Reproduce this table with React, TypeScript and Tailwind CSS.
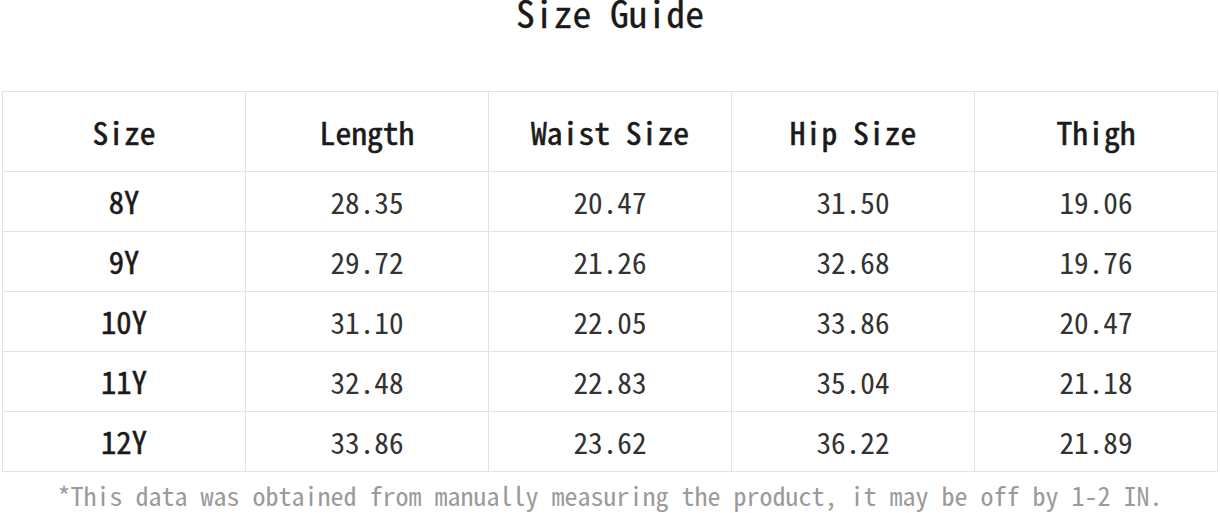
import React from "react";

const headers = ["Size", "Length", "Waist Size", "Hip Size", "Thigh"];
const rows = [
  ["8Y", "28.35", "20.47", "31.50", "19.06"],
  ["9Y", "29.72", "21.26", "32.68", "19.76"],
  ["10Y", "31.10", "22.05", "33.86", "20.47"],
  ["11Y", "32.48", "22.83", "35.04", "21.18"],
  ["12Y", "33.86", "23.62", "36.22", "21.89"],
];

export default function App() {
  return (
    <div className="w-[1220px] h-[513px] bg-white overflow-hidden [font-family:'Noto_Sans_Mono_CJK_SC','Liberation_Mono',monospace]">
      <div className="h-[23px] text-center text-[37.6px] leading-[23px] text-[#1a1a1a] [-webkit-text-stroke:0.3px_#1a1a1a]">
        Size Guide
      </div>
      <div className="mt-[68px] ml-[2px] w-[1216px] border-l border-t border-[#e3e3e3]">
        <div className="grid grid-cols-5">
          {headers.map((h) => (
            <div
              key={h}
              className="h-[80px] flex items-center justify-center border-r border-b border-[#e3e3e3] text-[31.6px] leading-none text-[#1a1a1a] [-webkit-text-stroke:0.6px_#1a1a1a]"
            >
              {h}
            </div>
          ))}
        </div>
        {rows.map((r) => (
          <div key={r[0]} className="grid grid-cols-5">
            {r.map((c, i) => (
              <div
                key={i}
                className={
                  "h-[60px] flex items-center justify-center border-r border-b border-[#e3e3e3] leading-none " +
                  (i === 0
                    ? "text-[30.6px] text-[#1a1a1a] [-webkit-text-stroke:0.5px_#1a1a1a]"
                    : "text-[29.2px] text-[#333333]")
                }
              >
                {c}
              </div>
            ))}
          </div>
        ))}
      </div>
      <div className="h-[42px] pt-[10px] text-center text-[26px] leading-none text-[#9a9a9a]">
        *This data was obtained from manually measuring the product, it may be off by 1-2 IN.
      </div>
    </div>
  );
}
